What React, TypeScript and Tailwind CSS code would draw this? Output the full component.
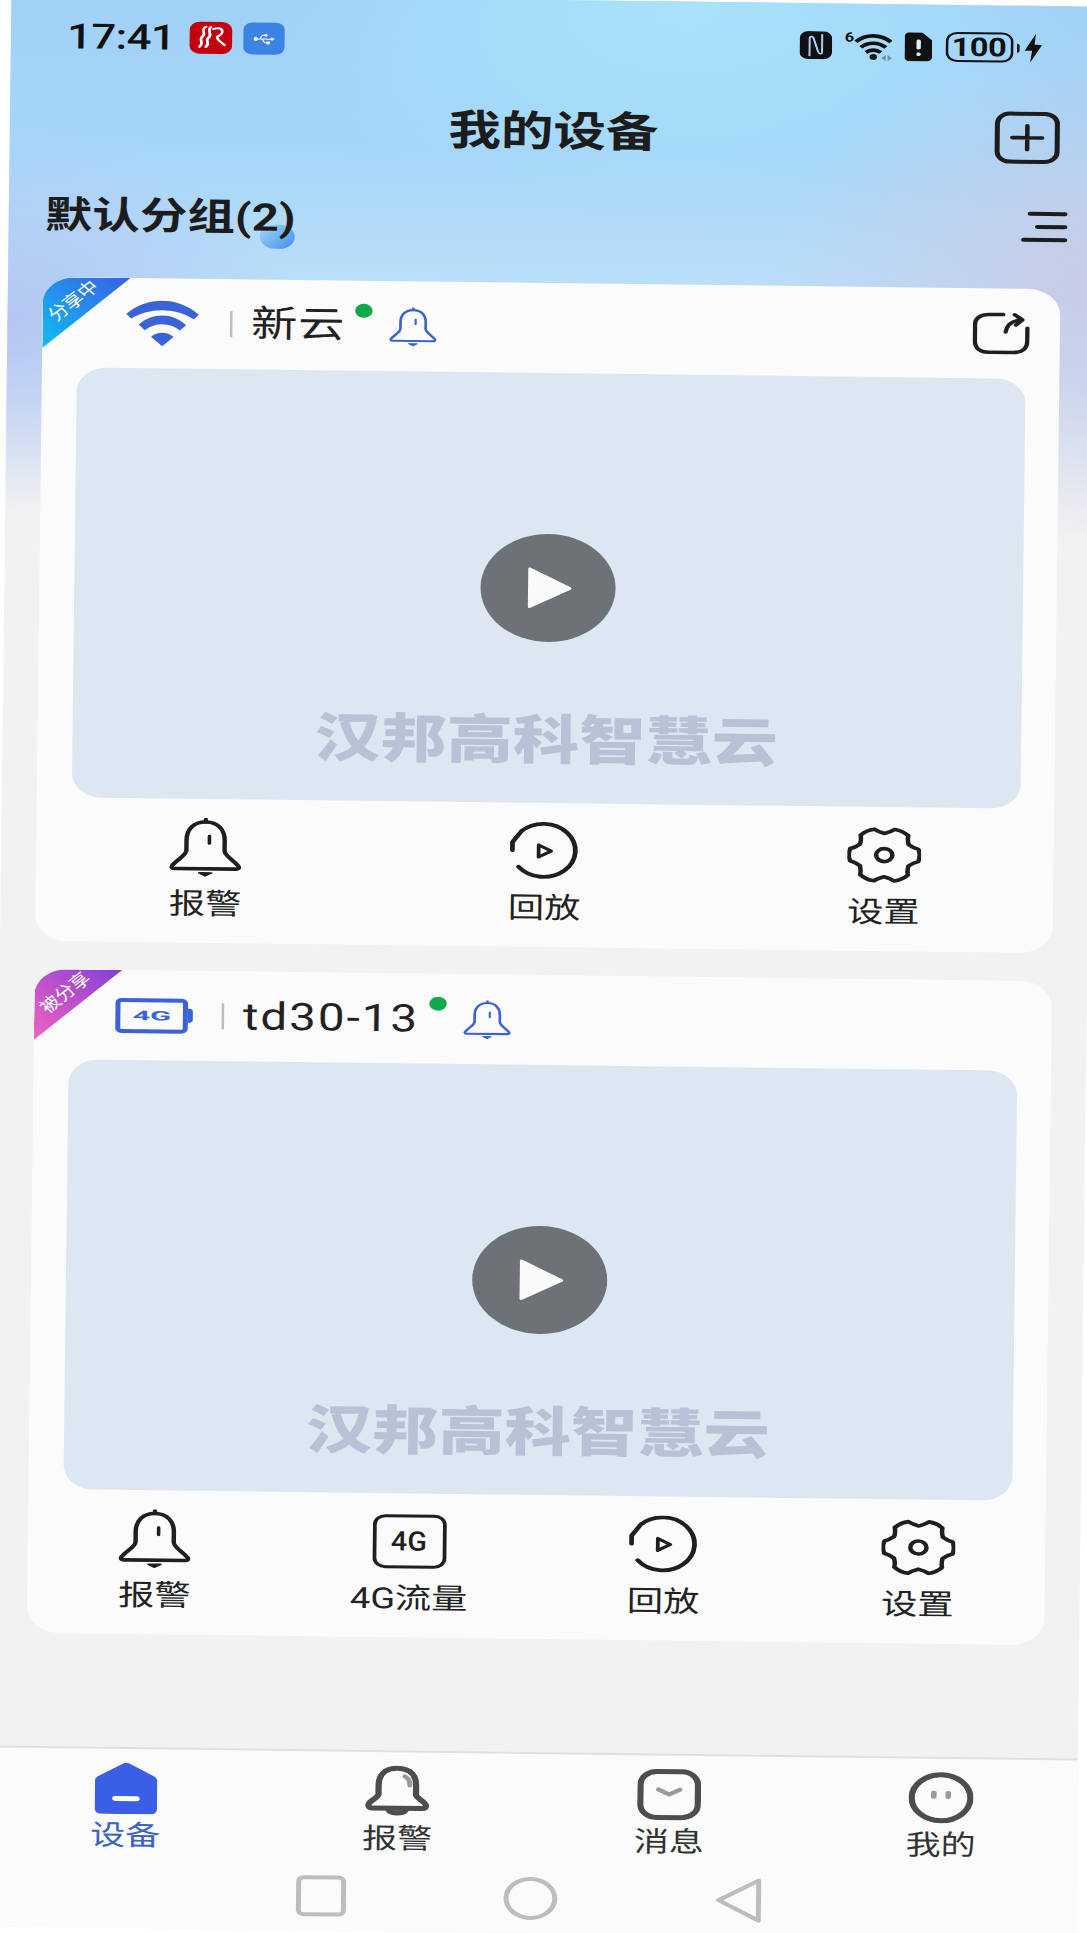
import React from "react";
import { FaUsb } from "react-icons/fa";

const BellIcon = ({ color = "#1f1f1f", sw = 3.5, w = 59, h = 59 }: { color?: string; sw?: number; w?: number; h?: number }) => (
  <svg viewBox="1 0 56 58" width={w} height={h} fill="none" stroke={color} strokeWidth={sw} strokeLinejoin="round" strokeLinecap="round">
    <path d="M29 4C19 4 14 12 14 22V32C14 37 7 41 3 47C2 49 3 50 5 50H53C55 50 56 49 55 47C51 41 44 37 44 32V22C44 12 39 4 29 4Z" />
    <path d="M29 1.5V4" />
    <path d="M32 18V25" strokeWidth={sw * 0.8} />
    <path d="M24 54H34L29 57Z" fill={color} strokeWidth={1.5} />
  </svg>
);

const ReplayIcon = () => (
  <svg viewBox="1 0 56 58" width={60} height={58} className="mr-[2px]" fill="none" stroke="#1f1f1f" strokeWidth={3.8} strokeLinecap="round" strokeLinejoin="round">
    <path d="M9 45A25.5 26.5 0 1 0 11 9.5L4 20.5V28.5" />
    <path d="M25 23V35L35 29Z" strokeWidth={3} />
  </svg>
);

// six-lobed cog outline: sharp dips between rounded teeth
const gearPath = (() => {
  const cx = 29.5;
  const cy = 28;
  const rx = 28;
  const ry = 27;
  const at = (deg: number, r: number) => {
    const t = (deg * Math.PI) / 180;
    return `${(cx + rx * r * Math.cos(t)).toFixed(1)} ${(cy + ry * r * Math.sin(t)).toFixed(1)}`;
  };
  let d = `M${at(-30, 0.8)}`;
  for (let i = 0; i < 6; i++) {
    const a = i * 60;
    d += `Q${at(a - 18, 0.88)} ${at(a - 13, 1)}Q${at(a, 1.05)} ${at(a + 13, 1)}Q${at(a + 18, 0.88)} ${at(a + 30, 0.8)}`;
  }
  return d + "Z";
})();

const GearIcon = () => (
  <svg viewBox="0 0 59 56" width={59} height={56} fill="none" stroke="#1f1f1f" strokeWidth={3.6} strokeLinejoin="round">
    <path d={gearPath} />
    <circle cx="29.5" cy="28" r="6.5" />
  </svg>
);

const Action = ({ icon, label }: { icon: React.ReactNode; label: string }) => (
  <div className="flex flex-1 flex-col items-center pt-[19px]">
    <div className="flex h-[58px] items-center justify-center">{icon}</div>
    <span className="mt-[9px] text-[29px] leading-[38px] text-[#222]">{label}</span>
  </div>
);

const Device = ({
  badge,
  badgeBg,
  icon,
  name,
  nameClass,
  share,
  actions,
}: {
  badge: string;
  badgeBg: string;
  icon: React.ReactNode;
  name: string;
  nameClass: string;
  share?: boolean;
  actions: React.ReactNode;
}) => (
  <div className="relative h-[664px] overflow-hidden rounded-[26px] bg-[#fbfbfb]">
    <div className={`absolute left-0 top-0 h-[71px] w-[70px] [clip-path:polygon(0_0,100%_0,0_100%)] ${badgeBg}`} />
    <span className="absolute left-0 top-[15px] w-[50px] -rotate-45 whitespace-nowrap text-center text-[16.5px] leading-[18px] text-white">{badge}</span>
    <div className="flex h-[90px] items-center pr-[24px]">
      <div className="ml-[64px] flex w-[64px] items-center justify-center">{icon}</div>
      <div className="ml-[22px] h-[26px] w-[2px] bg-[#bdbdbd]" />
      <span className={`ml-[15px] leading-[46px] text-[#222] ${nameClass}`}>{name}</span>
      <span className="mb-[30px] ml-[8px] h-[14px] w-[14px] rounded-full bg-[#0faa4a]" />
      <div className="ml-[13px]">
        <BellIcon color="#3a63cf" sw={3.2} w={39} h={39} />
      </div>
      {share && (
        <svg className="mb-[2px] ml-auto" viewBox="0 0 45 43" width={46} height={46} fill="none" stroke="#1f1f1f" strokeWidth={3.4} strokeLinecap="round" strokeLinejoin="round">
          <path d="M24 4H13C6 4 2 8 2 14V30C2 37 6 41 13 41H32C39 41 43 37 43 30V17" />
          <path d="M26 21C27 14 31 10 37 9" />
          <path d="M33 4L39 9L34 14" />
        </svg>
      )}
    </div>
    <div className="relative ml-[27.5px] mr-[27.5px] flex h-[430px] items-center justify-center rounded-[24px] bg-[#dde7f2]">
      <div className="flex h-[108px] w-[108px] items-center justify-center rounded-full bg-[#6c7276]">
        <svg viewBox="0 0 37 44" width={37} height={44} className="ml-[3px]">
          <path d="M3 2L35 21C36 22 36 23 35 23.5L3 42C2 42.5 1 42 1 41V3C1 2 2 1.5 3 2Z" fill="#fafafa" />
        </svg>
      </div>
      <span className="absolute bottom-[36px] left-0 right-0 text-center text-[53px] font-extrabold leading-[52px] text-[#b6c3d6]">汉邦高科智慧云</span>
    </div>
    <div className="flex">{actions}</div>
  </div>
);

const WifiBlue = () => (
  <svg viewBox="0 0 60 46" width={62} height={46} fill="#3a63d8">
    <path d="M1 14C18 -4 42 -4 59 14L55 18.500C40 7 20 7 5 18.500Z" />
    <path d="M11 24.500C22 12 38 12 49 24.500L44 30C36 22 24 22 16 30Z" />
    <path d="M21 36.500C26 31 34 31 39 36.500L30 46Z" />
  </svg>
);

const Battery4G = () => (
  <div className="flex items-center">
    <div className="flex h-[35px] w-[58px] items-center justify-center rounded-[5px] border-4 border-[#3a63d8]">
      <span className="scale-x-[1.9] text-[13px] font-bold leading-none text-[#3a63d8]">4G</span>
    </div>
    <div className="h-[14px] w-[4px] rounded-r-[3px] bg-[#3a63d8]" />
  </div>
);

export default function App() {
  return (
    <div className="h-[1933px] w-[1087px] overflow-hidden bg-white font-['Roboto','Noto_Sans_CJK_SC',sans-serif]">
      <div className="flex h-[1933px] w-[870px] origin-[435px_966px] flex-col bg-[#f2f2f2] bg-[radial-gradient(ellipse_340px_200px_at_62%_2%,#a9e2fc_0%,rgba(169,226,252,0)_100%),radial-gradient(ellipse_260px_250px_at_100%_52%,#c8cbe6_0%,rgba(200,203,230,0)_100%),radial-gradient(ellipse_230px_190px_at_0%_60%,#b3c6f2_0%,rgba(179,198,242,0)_100%),linear-gradient(180deg,#a1d1f6_0%,#a5d6f8_28%,#bbdff9_54%,#cfe2f6_68%,#e8edf3_84%,#f2f2f2_100%)] bg-[length:100%_540px] bg-no-repeat [transform:translateX(108.5px)_rotate(0.69deg)_scaleX(1.25)]">
        {/* status bar */}
        <div className="flex h-[84px] shrink-0 items-center pl-[45px] pr-[45px]">
          <span className="text-[35px] font-medium leading-none tracking-[-0.5px] text-[#111]">17:41</span>
          <div className="ml-[12px] flex h-[32px] w-[34px] items-center justify-center rounded-[8px] bg-[#c4000f]">
            <svg viewBox="0 0 34 32" width={34} height={32} fill="none" stroke="#fff" strokeWidth={2.2} strokeLinecap="round">
              <path d="M13 5C8 8 14 11 10 15C7 18 12 21 8 25" />
              <path d="M17 5C13 9 19 12 15 16C12 19 17 21 13 25" />
              <path d="M19 7C27 4 28 11 23 14C20 16 25 20 28 23" />
            </svg>
          </div>
          <div className="ml-[9px] flex h-[32px] w-[33px] items-center justify-center rounded-[7px] bg-[#3b84e6]">
            <FaUsb className="text-white" size={17} />
          </div>
          <div className="ml-auto flex items-center">
            <svg viewBox="0 0 26 28" width={26} height={28}>
              <rect width="26" height="28" rx="7" fill="#111" />
              <path d="M8 25V7C8 5 10 5 11 6.500L15 21C16 23 18 23 18 21V3" fill="none" stroke="#a3d2f6" strokeWidth={1.6} />
            </svg>
            <svg className="ml-[10px]" viewBox="0 0 38 30" width={38} height={30} fill="none" stroke="#111" strokeWidth={3.6}>
              <text x="0" y="11" fontSize="13" fontWeight="700" fill="#111" stroke="none">6</text>
              <path d="M9 11C17 3 29 3 37 11" />
              <path d="M13 16.500C19 11 27 11 33 16.500" />
              <path d="M17 21.500C20.500 18.500 25.500 18.500 29 21.500" />
              <circle cx="23" cy="26" r="3" fill="#111" stroke="none" />
              <path d="M33 24L29.500 27L33 30ZM34.500 24L38 27L34.500 30Z" fill="#6b8fb0" stroke="none" />
            </svg>
            <svg className="ml-[10px]" viewBox="0 0 22 29" width={22} height={29}>
              <path d="M4 0H14L22 8V25C22 27 20 29 18 29H4C2 29 0 27 0 25V4C0 2 2 0 4 0Z" fill="#111" />
              <rect x="9.500" y="7" width="3.500" height="10" rx="1.500" fill="#dbeefc" />
              <rect x="9.500" y="20" width="3.500" height="3.500" rx="1.500" fill="#dbeefc" />
            </svg>
            <div className="ml-[11px] flex h-[30px] w-[54px] items-center justify-center rounded-[9px] border-2 border-[#111]">
              <span className="text-[26px] font-bold leading-none tracking-[-0.3px] text-[#111]">100</span>
            </div>
            <div className="ml-[3px] h-[9px] w-[2.500px] rounded-r bg-[#111]" />
            <svg className="ml-[4px]" viewBox="0 0 14 29" width={14} height={29} fill="#111">
              <path d="M9 0L0 17H6L4.500 29L14 11H8Z" />
            </svg>
          </div>
        </div>
        {/* title */}
        <div className="grid h-[96px] shrink-0 grid-cols-[1fr_auto_1fr] items-center px-[30px]">
          <span />
          <span className="text-[42px] font-bold leading-none text-[#1c1c1c]">我的设备</span>
          <div className="flex h-[52px] w-[52px] items-center justify-center justify-self-end rounded-[12px] border-4 border-[#1c1c1c]">
            <svg viewBox="0 0 28 28" width={28} height={28} stroke="#1c1c1c" strokeWidth={3.6} strokeLinecap="round">
              <path d="M2 14H26M14 2V26" />
            </svg>
          </div>
        </div>
        {/* group */}
        <div className="flex h-[82px] shrink-0 items-center justify-between pl-[29px] pr-[23px]">
          <div className="relative">
            <span className="absolute left-[172px] top-[29px] h-[24px] w-[28px] rounded-full bg-[linear-gradient(135deg,#a8d8f8,#3f8fec)]" />
            <span className="relative text-[38px] font-bold leading-[44px] text-[#1c1c1c]">默认分组(2)</span>
          </div>
          <div className="flex flex-col items-end gap-[9px]">
            <div className="h-[4px] w-[32px] rounded-full bg-[#1c1c1c]" />
            <div className="h-[4px] w-[26px] rounded-full bg-[#1c1c1c]" />
            <div className="h-[4px] w-[37px] rounded-full bg-[#1c1c1c]" />
          </div>
        </div>
        {/* cards */}
        <div className="ml-[28px] mr-[28px] mt-[21px] flex flex-col gap-[28px]">
          <Device
            badge="分享中"
            badgeBg="bg-[linear-gradient(45deg,#10bdf2,#3a5fe6)]"
            icon={<WifiBlue />}
            name="新云"
            nameClass="text-[37px] tracking-[0.5px]"
            share
            actions={
              <>
                <Action icon={<BellIcon />} label="报警" />
                <Action icon={<ReplayIcon />} label="回放" />
                <Action icon={<GearIcon />} label="设置" />
              </>
            }
          />
          <Device
            badge="被分享"
            badgeBg="bg-[linear-gradient(45deg,#f062c0,#8440d8)]"
            icon={<Battery4G />}
            name="td30-13"
            nameClass="text-[38px] tracking-[1.6px]"
            actions={
              <>
                <Action icon={<BellIcon />} label="报警" />
                <Action
                  icon={
                    <div className="flex h-[54px] w-[59px] items-center justify-center rounded-[10px] border-[3.5px] border-[#1f1f1f]">
                      <span className="scale-x-[0.85] text-[27px] font-medium leading-none text-[#1f1f1f]">4G</span>
                    </div>
                  }
                  label="4G流量"
                />
                <Action icon={<ReplayIcon />} label="回放" />
                <Action icon={<GearIcon />} label="设置" />
              </>
            }
          />
        </div>
        {/* tab bar */}
        <div className="mt-auto h-[181px] shrink-0 border-t-2 border-[#dfdfe3] bg-[#fbfbfb]">
          <div className="flex h-[122px] pt-[13px]">
            <div className="flex flex-1 flex-col items-center">
              <svg viewBox="0 0 50 52" width={50} height={52}>
                <path d="M22.500 1.500C24 0.500 26 0.500 27.500 1.500L47 14C49 15.500 50 17 50 19V46C50 49.500 48 52 45 52H5C2 52 0 49.500 0 46V19C0 17 1 15.500 3 14Z" fill="#3a5fe6" />
                <rect x="14" y="34" width="22" height="5" rx="2.500" fill="#fff" />
              </svg>
              <span className="mt-[2px] text-[28px] leading-[40px] text-[#3a62c8]">设备</span>
            </div>
            <div className="flex flex-1 flex-col items-center">
              <svg viewBox="0 0 52 52" width={52} height={52} fill="none" stroke="#4d4d4d" strokeWidth={5} strokeLinejoin="round">
                <path d="M26 3C15 3 11 11 11 20V29C11 33 3 36 3 40C3 42 4 43 6 43H46C48 43 49 42 49 40C49 36 41 33 41 29V20C41 11 37 3 26 3Z" />
                <path d="M19 44C20 49 32 49 33 44" />
                <path d="M32 11C35 13 36 16 36 20" stroke="#9a9a9a" strokeLinecap="round" strokeWidth={4} />
              </svg>
              <span className="mt-[2px] text-[28px] leading-[40px] text-[#333]">报警</span>
            </div>
            <div className="flex flex-1 flex-col items-center">
              <svg viewBox="0 0 51 52" width={51} height={52} fill="none" stroke="#4d4d4d" strokeWidth={5}>
                <rect x="2.500" y="3" width="46" height="46" rx="13" />
                <path d="M17 21L25.500 26L34 21" stroke="#9a9a9a" strokeLinecap="round" strokeLinejoin="round" strokeWidth={4} />
              </svg>
              <span className="mt-[2px] text-[28px] leading-[40px] text-[#333]">消息</span>
            </div>
            <div className="flex flex-1 flex-col items-center">
              <svg viewBox="0 0 52 52" width={52} height={52} fill="none" stroke="#4d4d4d" strokeWidth={5}>
                <ellipse cx="26" cy="26" rx="23.500" ry="23" />
                <rect x="18" y="19" width="4.500" height="8" rx="2.200" fill="#9a9a9a" stroke="none" />
                <rect x="29.500" y="19" width="4.500" height="8" rx="2.200" fill="#9a9a9a" stroke="none" />
              </svg>
              <span className="mt-[2px] text-[28px] leading-[40px] text-[#333]">我的</span>
            </div>
          </div>
          <div className="flex h-[44px] items-center justify-center gap-[126px] pr-[6px]">
            <div className="h-[41px] w-[40px] rounded-[6px] border-4 border-[#bdbdbd]" />
            <div className="h-[43px] w-[43px] rounded-full border-4 border-[#bdbdbd]" />
            <svg viewBox="0 0 38 46" width={38} height={46} fill="none" stroke="#bdbdbd" strokeWidth={4} strokeLinejoin="round">
              <path d="M35 3V43L3 23Z" />
            </svg>
          </div>
        </div>
      </div>
    </div>
  );
}
